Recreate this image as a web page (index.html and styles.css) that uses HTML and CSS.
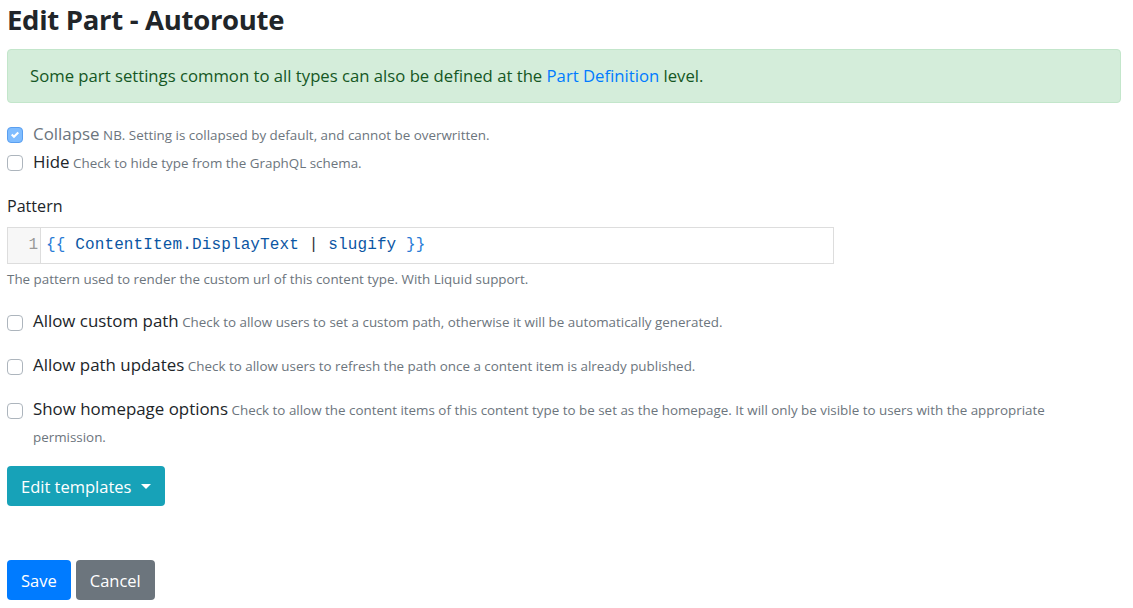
FILE: index.html
```html
<!DOCTYPE html>
<html lang="en">
<head>
    <meta charset="UTF-8">
    <title>Edit Part - Autoroute</title>
    <link rel="stylesheet" href="styles.css">
</head>
<body>
    <h1 class="page-title">Edit Part - Autoroute</h1>

    <div class="alert-success">
        Some part settings common to all types can also be defined at the <a href="#">Part Definition</a> level.
    </div>

    <div class="settings">
        <div class="check-row">
            <input type="checkbox" class="check" checked disabled>
            <div class="check-text">
                <label class="check-label disabled">Collapse</label>
                <span class="hint">NB. Setting is collapsed by default, and cannot be overwritten.</span>
            </div>
        </div>
        <div class="check-row">
            <input type="checkbox" class="check">
            <div class="check-text">
                <label class="check-label">Hide</label>
                <span class="hint">Check to hide type from the GraphQL schema.</span>
            </div>
        </div>
    </div>

    <div class="field">
        <label class="field-label">Pattern</label>
        <div class="editor">
            <div class="gutter">1</div>
            <div class="code"><span class="brace">{{</span> <span class="ident">ContentItem.DisplayText</span> <span class="pipe">|</span> <span class="ident">slugify</span> <span class="brace">}}</span></div>
        </div>
        <div class="hint block">The pattern used to render the custom url of this content type. With Liquid support.</div>
    </div>

    <div class="options">
        <div class="check-row">
            <input type="checkbox" class="check">
            <div class="check-text">
                <label class="check-label">Allow custom path</label>
                <span class="hint">Check to allow users to set a custom path, otherwise it will be automatically generated.</span>
            </div>
        </div>
        <div class="check-row">
            <input type="checkbox" class="check">
            <div class="check-text">
                <label class="check-label">Allow path updates</label>
                <span class="hint">Check to allow users to refresh the path once a content item is already published.</span>
            </div>
        </div>
        <div class="check-row">
            <input type="checkbox" class="check">
            <div class="check-text">
                <label class="check-label">Show homepage options</label>
                <span class="hint">Check to allow the content items of this content type to be set as the homepage. It will only be visible to users with the appropriate permission.</span>
            </div>
        </div>
    </div>

    <button class="btn btn-info">Edit templates <span class="caret"></span></button>

    <div class="actions">
        <button class="btn btn-primary">Save</button>
        <button class="btn btn-secondary">Cancel</button>
    </div>
</body>
</html>
```
FILE: styles.css
```css
body {
    margin: 0;
    padding: 0 12px 0 7px;
    font-family: "Open Sans", Arial, sans-serif;
    font-size: 15px;
    color: #212529;
    background: #fff;
}

.page-title {
    font-size: 27.5px;
    font-weight: 700;
    margin: 0;
    padding-top: 1px;
    line-height: 38px;
    letter-spacing: -0.3px;
}

.alert-success {
    margin-top: 10px;
    background-color: #d4edda;
    border: 1px solid #c3e6cb;
    border-radius: 4px;
    color: #155724;
    font-size: 16.7px;
    padding: 13px 22px 14px;
    line-height: 25px;
}

.alert-success a {
    color: #007bff;
    text-decoration: none;
}

.settings {
    margin-top: 18px;
    display: flex;
    flex-direction: column;
}

.settings .check-text {
    line-height: 28px;
}

.check-row {
    display: flex;
    align-items: flex-start;
}

.check {
    appearance: none;
    width: 16px;
    height: 16px;
    margin: 6px 10px 0 0;
    border: 1px solid #adb5bd;
    border-radius: 4px;
    background: #fff;
    flex-shrink: 0;
}

.check:checked {
    background-color: #80bdff;
    border-color: #5a9ff0;
    background-image: url("data:image/svg+xml,%3csvg xmlns='http://www.w3.org/2000/svg' width='8' height='8' viewBox='0 0 8 8'%3e%3cpath fill='%23fff' d='M6.564.75l-3.59 3.612-1.538-1.55L0 4.26l2.974 2.99L8 2.193z'/%3e%3c/svg%3e");
    background-repeat: no-repeat;
    background-position: center;
    background-size: 8px 8px;
}

.check-text {
    flex: 1;
    font-size: 13.4px;
    line-height: 27px;
}

.check-text .check-label,
.check-text .hint {
    line-height: 1;
}

.check-label {
    font-size: 16.9px;
}

.check-label.disabled {
    color: #6c757d;
}

.hint {
    font-size: 13.4px;
    color: #6c757d;
}

.hint.block {
    display: block;
    margin-top: 6px;
}

.field {
    margin-top: 18px;
}

.field-label {
    display: block;
    font-size: 16.1px;
    margin-bottom: 10px;
}

.editor {
    display: flex;
    width: 827px;
    height: 37px;
    border: 1px solid #ddd;
    box-sizing: border-box;
}

.gutter {
    width: 30px;
    background: #f7f7f7;
    border-right: 1px solid #ddd;
    color: #999;
    font-family: "Liberation Mono", monospace;
    font-size: 16px;
    text-align: right;
    padding-right: 2px;
    line-height: 35px;
}

.code {
    font-family: "Liberation Mono", monospace;
    font-size: 16px;
    letter-spacing: 0.13px;
    line-height: 35px;
    padding-left: 5px;
    white-space: pre;
}

.brace {
    color: #2a7bd6;
}

.ident {
    color: #0b56a3;
}

.pipe {
    color: #333;
}

.options {
    margin-top: 21px;
    display: flex;
    flex-direction: column;
    gap: 17px;
}

.btn {
    font-family: "Open Sans", Arial, sans-serif;
    font-size: 16.5px;
    color: #fff;
    border: none;
    border-radius: 4px;
    height: 40px;
    padding: 0 14px;
    cursor: pointer;
}

.btn-info {
    margin-top: 15px;
    background-color: #17a2b8;
    display: flex;
    align-items: center;
    gap: 10px;
}

.caret {
    display: inline-block;
    border-top: 5px solid #fff;
    border-left: 5px solid transparent;
    border-right: 5px solid transparent;
}

.btn-primary {
    background-color: #007bff;
}

.btn-secondary {
    background-color: #6c757d;
}

.actions {
    margin-top: 54px;
    display: flex;
    gap: 5px;
}
```
